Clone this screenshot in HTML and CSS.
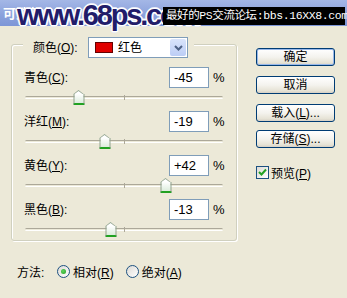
FILE: index.html
```html
<!DOCTYPE html>
<html lang="zh-CN">
<head>
    <meta charset="UTF-8">
    <meta name="viewport" content="width=device-width, initial-scale=1.0">
    <title>可选颜色</title>
    <link rel="stylesheet" href="styles.css">
</head>
<body>

<div class="titlebar"><span class="title">可选颜色</span></div>
<div class="watermark">www.68ps.com</div>
<div class="banner">最好的PS交流论坛:bbs.16XX8.com</div>

<div class="dialog">
    <div class="left">
        <div class="group">
            <div class="group-head">
                <span class="label">颜色(<u>O</u>):</span>
                <div class="select">
                    <span class="swatch"></span>
                    <span class="select-text">红色</span>
                    <span class="drop">
                        <svg width="9" height="6" viewBox="0 0 9 6"><path d="M1 1 L4.5 4.5 L8 1" fill="none" stroke="#4d6185" stroke-width="2"/></svg>
                    </span>
                </div>
            </div>

            <div class="field">
                <div class="row"><span class="label">青色(<u>C</u>):</span><span class="input">-45</span><span class="pct">%</span></div>
                <div class="slider"><span class="tick"></span><span class="thumb" style="left: 27.5%"></span></div>
            </div>
            <div class="field">
                <div class="row"><span class="label">洋红(<u>M</u>):</span><span class="input">-19</span><span class="pct">%</span></div>
                <div class="slider"><span class="tick"></span><span class="thumb" style="left: 40.5%"></span></div>
            </div>
            <div class="field">
                <div class="row"><span class="label">黄色(<u>Y</u>):</span><span class="input">+42</span><span class="pct">%</span></div>
                <div class="slider"><span class="tick"></span><span class="thumb" style="left: 71%"></span></div>
            </div>
            <div class="field">
                <div class="row"><span class="label">黑色(<u>B</u>):</span><span class="input">-13</span><span class="pct">%</span></div>
                <div class="slider"><span class="tick"></span><span class="thumb" style="left: 43.5%"></span></div>
            </div>
        </div>

        <div class="method">
            <span class="method-label">方法:</span>
            <span class="radio checked"></span><span class="radio-text">相对(<u>R</u>)</span>
            <span class="radio"></span><span class="radio-text">绝对(<u>A</u>)</span>
        </div>
    </div>

    <div class="right">
        <div class="btn default">确定</div>
        <div class="btn">取消</div>
        <div class="btn gap">载入(<u>L</u>)...</div>
        <div class="btn">存储(<u>S</u>)...</div>
        <div class="check-row">
            <span class="checkbox">
                <svg width="9" height="9" viewBox="0 0 9 9"><path d="M1 4 L3.5 6.5 L8 1.5" fill="none" stroke="#21a121" stroke-width="2"/></svg>
            </span>
            <span>预览(<u>P</u>)</span>
        </div>
    </div>
</div>

</body>
</html>
```

FILE: styles.css
```css
body {
    margin: 0;
    width: 347px;
    height: 298px;
    overflow: hidden;
    background-color: #ece9d8;
    font-family: "Liberation Sans", "Noto Sans CJK SC", sans-serif;
    font-size: 12px;
    color: #000;
    position: relative;
}

u {
    text-decoration: underline;
}

.titlebar {
    height: 26px;
    background: linear-gradient(#a4b7e6, #8aa1dc 60%, #7d96d7);
}

.title {
    display: inline-block;
    padding: 3px 0 0 3px;
    color: #fff;
    font-weight: bold;
    font-size: 13px;
}

.watermark {
    position: absolute;
    left: 17px;
    top: -1px;
    font-family: "Liberation Sans", sans-serif;
    font-weight: bold;
    font-size: 29px;
    letter-spacing: -2.2px;
    color: #221c6a;
    text-shadow: 1px 0 0 #fff, -1px 0 0 #fff, 0 1px 0 #fff, 0 -1px 0 #fff,
        1px 1px 0 #fff, -1px -1px 0 #fff, 1px -1px 0 #fff, -1px 1px 0 #fff,
        2px 0 0 #e8ecf8, -2px 0 0 #e8ecf8, 0 2px 0 #e8ecf8, 0 -2px 0 #e8ecf8;
}

.banner {
    position: absolute;
    left: 163px;
    top: 7px;
    width: 179px;
    height: 18px;
    padding-left: 3px;
    background-color: #000;
    color: #fff;
    font-family: "Liberation Mono", "Noto Sans CJK SC", monospace;
    font-size: 11.5px;
    letter-spacing: -0.4px;
    line-height: 18px;
    white-space: nowrap;
}

.dialog {
    display: flex;
}

.left {
    width: 237px;
}

/* group box */
.group {
    margin: 18px 0 0 11px;
    width: 200px;
    padding: 0 12px;
    border: 1px solid #d0d0bf;
    border-radius: 3px;
    box-shadow: inset 1px 1px 0 #fff, 1px 1px 0 #fff;
}

.group-head {
    display: flex;
    align-items: center;
    width: fit-content;
    height: 21px;
    margin: -8px 0 0 -1px;
    padding: 0 6px 0 10px;
    background-color: #ece9d8;
}

.group-head .label {
    width: 55px;
}

.label {
    line-height: 14px;
}

.select {
    display: flex;
    align-items: center;
    width: 98px;
    height: 19px;
    border: 1px solid #7f9db9;
    background-color: #fff;
}

.swatch {
    width: 16px;
    height: 9px;
    margin-left: 6px;
    border: 1px solid #600;
    background-color: #e00000;
}

.select-text {
    margin-left: 5px;
    line-height: 14px;
}

.drop {
    display: flex;
    align-items: center;
    justify-content: center;
    margin-left: auto;
    margin-right: 1px;
    width: 16px;
    height: 17px;
    border-radius: 2px;
    background: linear-gradient(#d9e4fb, #bccdf5);
}

.field .row {
    display: flex;
    align-items: center;
    height: 21px;
}

.group-head + .field .row {
    margin-top: 9px;
}

.input {
    margin-left: auto;
    width: 34px;
    height: 19px;
    padding-left: 4px;
    border: 1px solid #7f9db9;
    background-color: #fff;
    font-size: 13px;
    line-height: 19px;
}

.pct {
    width: 11px;
    margin-left: 4px;
    font-size: 13px;
}

/* slider */
.slider {
    position: relative;
    width: 198px;
    height: 12px;
    margin: 3px 0 8px 1px;
}

.field:last-child .slider {
    margin-bottom: 5px;
}

.slider::before {
    content: "";
    position: absolute;
    left: 0;
    right: 0;
    top: 5px;
    height: 1px;
    border-top: 1px solid #aca899;
    border-bottom: 1px solid #fff;
    border-radius: 2px;
}

.tick {
    position: absolute;
    left: 99px;
    top: 4px;
    width: 1px;
    height: 5px;
    background-color: #aca899;
}

.thumb {
    position: absolute;
    top: 0;
    width: 9px;
    height: 9px;
    transform: translateX(-50%);
    border: 1px solid #8fa38f;
    border-top: none;
    border-bottom: 2px solid #21a121;
    background: linear-gradient(#fff, #dcecdc);
    margin-top: 3px;
}

.thumb::before {
    content: "";
    position: absolute;
    left: -1px;
    top: -4px;
    width: 0;
    height: 0;
    border-left: 5.5px solid transparent;
    border-right: 5.5px solid transparent;
    border-bottom: 4px solid #8fa38f;
}

.thumb::after {
    content: "";
    position: absolute;
    left: 0;
    top: -3px;
    width: 0;
    height: 0;
    border-left: 4.5px solid transparent;
    border-right: 4.5px solid transparent;
    border-bottom: 3px solid #fff;
}

/* method row */
.method {
    display: flex;
    align-items: center;
    height: 16px;
    margin: 22px 0 0 17px;
}

.method-label {
    width: 40px;
}

.radio {
    position: relative;
    width: 11px;
    height: 11px;
    border: 1px solid #1c5180;
    border-radius: 50%;
    background: linear-gradient(135deg, #dcdad5, #fff);
}

.radio.checked::after {
    content: "";
    position: absolute;
    left: 3px;
    top: 3px;
    width: 5px;
    height: 5px;
    border-radius: 50%;
    background: radial-gradient(circle at 40% 40%, #5fd35f, #21a121);
}

.radio-text {
    margin: 0 12px 0 3px;
}

/* buttons */
.right {
    margin-left: 19px;
    padding-top: 22px;
}

.btn {
    width: 77px;
    height: 16px;
    margin-bottom: 10px;
    border: 1px solid #003c74;
    border-radius: 3px;
    background: linear-gradient(#fff, #f4f3ee 50%, #e6e3d6 85%, #d6d0c5);
    text-align: center;
    line-height: 16px;
}

.btn.default {
    box-shadow: inset 0 0 0 1px #98b8ea;
}

.btn.gap {
    margin-top: 8px;
    margin-bottom: 8px;
}

.check-row {
    display: flex;
    align-items: center;
    margin-top: 16px;
}

.checkbox {
    display: flex;
    align-items: center;
    justify-content: center;
    width: 11px;
    height: 11px;
    margin-right: 2px;
    border: 1px solid #1c5180;
    background: linear-gradient(135deg, #dcdad5, #fff);
}
```
